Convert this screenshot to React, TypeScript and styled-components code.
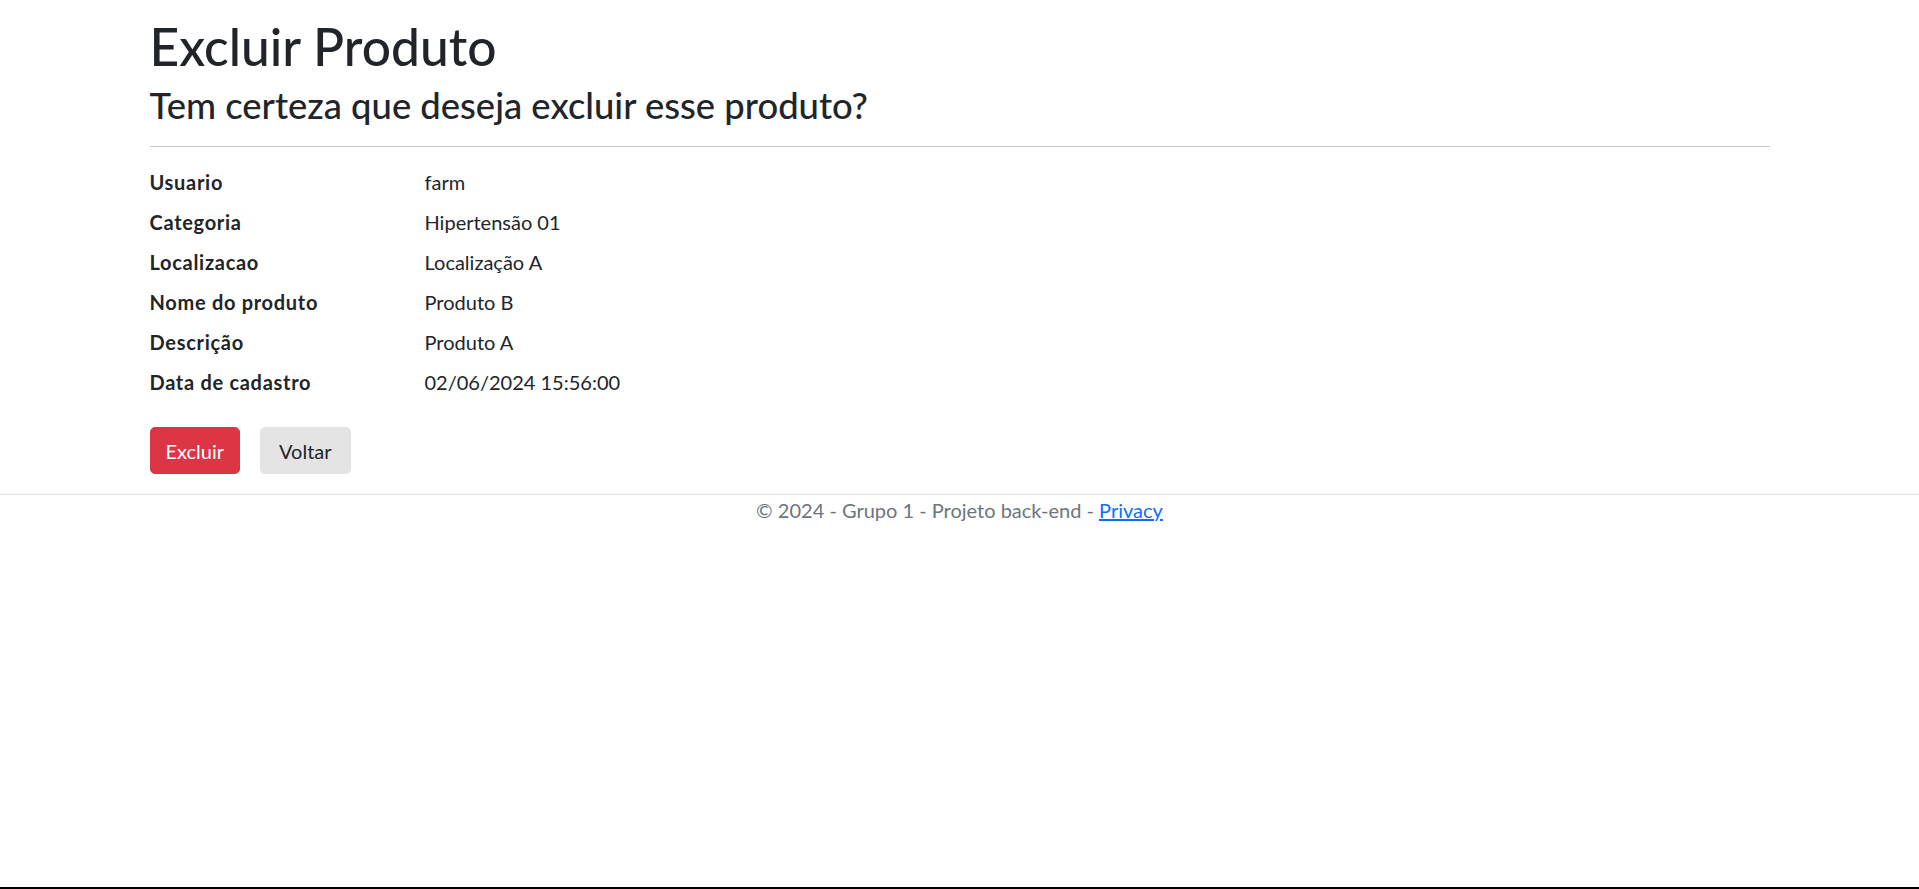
import React from "react";
import styled, { createGlobalStyle } from "styled-components";

const GlobalStyle = createGlobalStyle`
  *, *::before, *::after { box-sizing: border-box; }
  html, body { margin: 0; padding: 0; background: #fff; }
  body {
    font-family: Lato, "Noto Sans", "Liberation Sans", sans-serif;
    font-size: 20px;
    line-height: 1.5;
    color: #212529;
  }
`;

const Page = styled.div`
  min-height: 889px;
  display: flex;
  flex-direction: column;
  border-bottom: 2px solid #000;
`;

const Container = styled.main`
  width: 1650px;
  margin: 0 auto;
  padding: 16px 15px 20px;
`;

const Title = styled.h1`
  margin: 0 0 5px;
  font-size: 51.5px;
  font-weight: 500;
  line-height: 60px;
`;

const Subtitle = styled.h2`
  margin: 0;
  font-size: 36.4px;
  font-weight: 500;
  line-height: 48px;
`;

const Divider = styled.hr`
  margin: 17px 0 20px;
  border: 0;
  border-top: 1px solid #c4c5c7;
`;

const DetailList = styled.dl`
  display: grid;
  grid-template-columns: 275px 1fr;
  margin: 0 0 20px;
`;

const Term = styled.dt`
  font-weight: 700;
  letter-spacing: 0.7px;
  margin: 0 0 10px;
`;

const Value = styled.dd`
  margin: 0 0 10px;
`;

const Actions = styled.div`
  display: flex;
  gap: 20px;
`;

const Button = styled.button<{ $variant: "danger" | "light" }>`
  font-family: inherit;
  font-size: 20px;
  line-height: 1.5;
  padding: 7.5px ${(p) => (p.$variant === "danger" ? "15px" : "18px")};
  border-radius: 5px;
  border: 1px solid ${(p) => (p.$variant === "danger" ? "#dc3545" : "#e4e4e4")};
  background: ${(p) => (p.$variant === "danger" ? "#dc3545" : "#e4e4e4")};
  color: ${(p) => (p.$variant === "danger" ? "#fff" : "#212529")};
  cursor: pointer;
`;

const Footer = styled.footer`
  border-top: 1px solid #dee2e6;
  text-align: center;
  color: #6c757d;
  font-size: 20px;
  line-height: 30px;
`;

const Link = styled.a`
  color: #0d6efd;
  text-decoration: underline;
`;

const rows: [string, string][] = [
  ["Usuario", "farm"],
  ["Categoria", "Hipertensão 01"],
  ["Localizacao", "Localização A"],
  ["Nome do produto", "Produto B"],
  ["Descrição", "Produto A"],
  ["Data de cadastro", "02/06/2024 15:56:00"],
];

export default function App() {
  return (
    <Page>
      <GlobalStyle />
      <Container>
        <Title>Excluir Produto</Title>
        <Subtitle>Tem certeza que deseja excluir esse produto?</Subtitle>
        <Divider />
        <DetailList>
          {rows.map(([k, v]) => (
            <React.Fragment key={k}>
              <Term>{k}</Term>
              <Value>{v}</Value>
            </React.Fragment>
          ))}
        </DetailList>
        <Actions>
          <Button $variant="danger">Excluir</Button>
          <Button $variant="light">Voltar</Button>
        </Actions>
      </Container>
      <Footer>
        © 2024 - Grupo 1 - Projeto back-end - <Link href="#">Privacy</Link>
      </Footer>
    </Page>
  );
}
